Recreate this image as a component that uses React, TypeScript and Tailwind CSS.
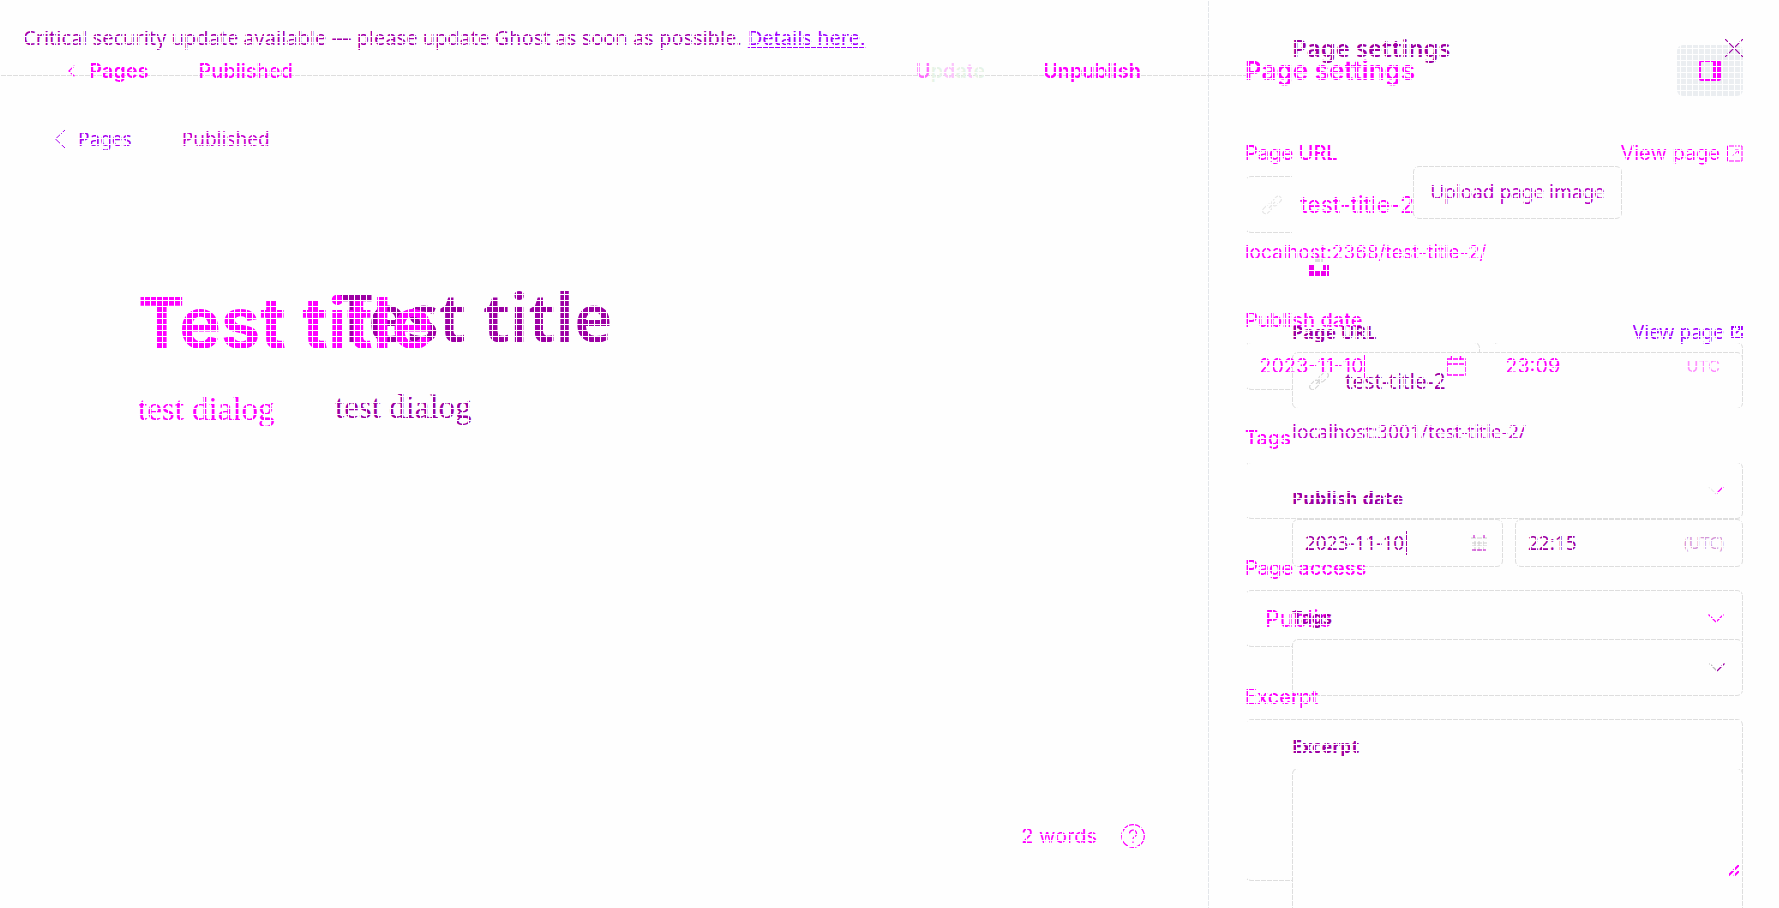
import React from "react";

const label = "relative z-20 flex h-6 items-center text-xl font-medium";
const newBox = "flex items-center rounded-md border border-[#dedede] border-l-transparent";
const oldBox = "relative z-10 flex items-center rounded-md border border-[#dedede] bg-[#fefefe]";
const oldLabel = "relative z-20 flex h-6 items-center text-lg font-bold";
const field = "relative z-20 min-w-0 flex-1 bg-transparent leading-6 outline-none";

function Chevron({ className, light }: { className?: string; light?: string }) {
  return (
    <svg viewBox="0 0 16 9" className={className} fill="none" strokeWidth="1.3">
      <path d="M0.5 0.5 L8 8" stroke={light ?? "currentColor"} />
      <path d="M8 8 L15.5 0.5" stroke="currentColor" />
    </svg>
  );
}

function Back({ className }: { className?: string }) {
  return (
    <svg viewBox="0 0 12 20" className={className} fill="none" stroke="currentColor">
      <path d="M11 1 L1.5 10 L11 19" />
    </svg>
  );
}

function LinkIcon({ className }: { className?: string }) {
  return (
    <svg viewBox="0 0 20 20" className={className} fill="none" stroke="currentColor" strokeWidth="1.2">
      <rect x="9" y="3" width="11" height="6" rx="3" transform="rotate(-45 14.5 6)" />
      <rect x="0" y="11" width="11" height="6" rx="3" transform="rotate(-45 5.5 14)" />
      <path d="M7 13 L13 7" />
    </svg>
  );
}

function NewEditor() {
  return (
    <div className="col-start-1 row-start-1 flex min-h-screen font-['Inter',sans-serif] text-[#ff00ff]">
      <main className="flex min-w-0 flex-1 flex-col">
        <nav className="relative z-20 mt-[47px] flex h-12 items-center pl-[68px] pr-[67px] text-xl font-medium">
          <a href="#pages" className="flex items-center gap-[14px] font-semibold">
            <Back className="h-3 w-[7px] stroke-2" />
            Pages
          </a>
          <span className="ml-[50px]">Published</span>
          <button type="button" className="ml-auto text-[#e6f3e6]">
            <span className="text-[#ff6bff]">U</span>p<span className="text-[#fbc4fb]">d</span>a<span className="text-[#fbc4fb]">t</span>e
          </button>
          <button type="button" className="ml-[58px] font-semibold">Unpublish</button>
        </nav>
        <article className="relative z-20 mt-[184px] flex flex-col pl-[138px]">
          <h1 className="text-[70px] font-bold leading-[88px]">Test title</h1>
          <p className="mt-[22px] font-['Liberation_Serif',serif] text-[33px] leading-10">test dialog</p>
        </article>
        <footer className="relative z-20 mb-12 mt-auto flex h-12 items-center justify-end gap-6 pr-[63px] text-xl">
          2 words
          <svg viewBox="0 0 24 24" className="size-6" fill="none" stroke="currentColor" strokeWidth="1.2">
            <circle cx="12" cy="12" r="11.3" />
            <path d="M8.5 9.5a3.5 3.5 0 1 1 5 3.2c-1 .6-1.500 1-1.500 2.300M12 17.500v1.500" />
          </svg>
        </footer>
      </main>
      <aside className="w-[571px] shrink-0 border-l border-[#e3e6ea] px-9 pt-[45px]">
        <header className="flex h-[51px] items-center justify-between">
          <h2 className="relative z-20 text-[26px] font-semibold">Page settings</h2>
          <button type="button" aria-label="Settings" className="relative z-20 flex h-[51px] w-[66px] items-center justify-center rounded-md bg-[#ebeef1]">
            <svg viewBox="0 0 22 21" className="h-[21px] w-[22px]">
              <rect x="1" y="1" width="20" height="19" rx="1.500" fill="none" stroke="currentColor" strokeWidth="2" />
              <rect x="14" y="1" width="7" height="19" fill="currentColor" />
            </svg>
          </button>
        </header>
        <div className="mt-[45px] flex justify-between">
          <label htmlFor="url" className={label}>Page URL</label>
          <a href="#view" className="relative z-20 flex h-6 items-center gap-[6px] text-xl">
            View page
            <svg viewBox="0 0 17 17" className="size-[17px]" fill="none" stroke="currentColor">
              <path d="M10.500 1H1.500V16H16V1H12M7 10.500L12.500 5M8.500 5H12.500V8.500" />
            </svg>
          </a>
        </div>
        <div className={newBox + " mt-[11px] h-[57px] pl-4"}>
          <LinkIcon className="relative z-20 size-5 text-[#e6e6e6]" />
          <input id="url" className={field + " ml-[18px] text-[23px]"} defaultValue="test-title-2" />
        </div>
        <p className="relative z-20 mt-2 text-[19px] leading-6">localhost:2368/test-title-2/</p>
        <label htmlFor="date" className={label + " mt-[43px]"}>Publish date</label>
        <div className="mt-[10px] flex gap-3">
          <div className={newBox + " h-12 w-[235px] shrink-0 px-[13px]"}>
            <div className="relative z-20 flex min-w-0 flex-1 items-center">
              <input id="date" className="w-[106px] border-r border-[#ff00ff] bg-transparent text-xl leading-6 outline-none" defaultValue="2023-11-10" />
            </div>
            <svg viewBox="0 0 20 20" className="relative z-20 size-5 shrink-0" fill="none" stroke="currentColor">
              <path d="M1 3H19V19H1ZM1 8H19M5.500 0V5M14.500 0V5" strokeWidth="1.500" />
            </svg>
          </div>
          <div className={newBox + " h-12 min-w-0 flex-1 pl-3 pr-[22px]"}>
            <input aria-label="Time" className={field + " text-xl"} defaultValue="23:09" />
            <span className="relative z-20 text-base text-[#ff8cff]">UTC</span>
          </div>
        </div>
        <label htmlFor="tags" className={label + " mt-9"}>Tags</label>
        <div className={newBox + " mt-3 h-[57px] pr-[18px]"}>
          <input id="tags" className={field + " text-xl"} />
          <Chevron className="relative z-20 h-[9px] w-4" light="#eeeeee" />
        </div>
        <label htmlFor="access" className={label + " mt-[37px]"}>Page access</label>
        <div className={newBox + " mt-[10px] h-[57px] pl-[19px] pr-[18px]"}>
          <select id="access" className={field + " appearance-none text-[23px]"}>
            <option>Public</option>
          </select>
          <Chevron className="relative z-20 h-[9px] w-4" />
        </div>
        <label htmlFor="excerpt" className={label + " mt-[38px]"}>Excerpt</label>
        <div className={newBox + " mt-[10px] h-[162px] items-end pb-1 pr-[3px]"}>
          <textarea id="excerpt" className={field + " h-full resize-none"} />
          <svg viewBox="0 0 11 11" className="relative z-20 size-[11px]" stroke="currentColor" strokeWidth="2">
            <path d="M0 11L11 0M6 11L11 6" />
          </svg>
        </div>
      </aside>
    </div>
  );
}

function OldEditor() {
  return (
    <div className="col-start-1 row-start-1 flex min-h-screen font-['Noto_Sans','Open_Sans',sans-serif] text-[#9c00a3]">
      <main className="flex min-w-0 flex-1 flex-col">
        <p className="flex h-[76px] items-center gap-[6px] border-b border-[#dedede] pl-[23px] text-xl text-[#a400ac]">
          Critical security update available — please update Ghost as soon as possible.
          <a href="#details" className="text-[#a000ff] underline underline-offset-2">Details here.</a>
        </p>
        <nav className="mt-[39px] flex h-12 items-center pl-[54px] text-[19px]">
          <a href="#all" className="flex items-center gap-3 text-[#a800f0]">
            <Back className="h-5 w-3" />
            Pages
          </a>
          <span className="ml-[50px] text-[#c400cc]">Published</span>
        </nav>
        <article className="relative z-10 mt-[109px] flex flex-col pl-[335px]">
          <h1 className="text-[66px] font-semibold leading-[88px]">Test title</h1>
          <p className="mt-[27px] font-['Liberation_Serif',serif] text-[33px] leading-10">test dialog</p>
        </article>
      </main>
      <aside className="flex w-[533px] shrink-0 flex-col pl-[46px] pr-9 pt-8">
        <header className="relative z-20 flex h-8 items-center justify-between">
          <h2 className="text-2xl font-semibold">Page settings</h2>
          <button type="button" aria-label="Close">
            <svg viewBox="0 0 18 18" className="size-[18px]" stroke="currentColor" strokeWidth="1.200">
              <path d="M0 0L18 18M18 0L0 18" />
            </svg>
          </button>
        </header>
        <div className="relative z-10 mt-[27px] grid h-[202px] bg-[#fefefe]">
          <svg viewBox="0 0 20 20" className="relative z-20 col-start-1 row-start-1 mb-[17px] ml-[17px] size-5 self-end">
            <path d="M6 0h8v6H6z" fill="#dddddd" />
            <path d="M0 9h6v5h8V9h6v11H0z" fill="#ee00ee" />
          </svg>
          <button type="button" className="col-start-1 row-start-1 h-[53px] w-[209px] place-self-center rounded-md border border-[#dedede] text-[19px] text-[#b800c4]">
            Upload page image
          </button>
        </div>
        <div className="mt-[27px] flex justify-between">
          <label htmlFor="old-url" className={oldLabel}>Page URL</label>
          <a href="#open" className="relative z-20 flex h-6 items-center gap-[7px] text-[19px] text-[#a000ff]">
            View page
            <svg viewBox="0 0 12 12" className="size-3" fill="none" stroke="currentColor" strokeWidth="1.800">
              <path d="M5 1H1V11H11V7M5 7L11 1M7 1H11V5" />
            </svg>
          </a>
        </div>
        <div className={oldBox + " mt-2 h-[57px] pl-4"}>
          <LinkIcon className="size-5 text-[#d6d6d6]" />
          <input id="old-url" className={field + " ml-4 text-[21px]"} defaultValue="test-title-2" />
        </div>
        <p className="relative z-20 mt-[11px] text-[19px] leading-6 text-[#bc00c8]">localhost:3001/test-title-2/</p>
        <label htmlFor="old-date" className={oldLabel + " mt-[42px]"}>Publish date</label>
        <div className="mt-[9px] flex gap-3">
          <div className={oldBox + " h-12 w-[211px] shrink-0 px-3"}>
            <div className="flex min-w-0 flex-1 items-center">
              <input id="old-date" className="w-[102px] border-r border-[#9c00a3] bg-transparent text-[19px] leading-6 outline-none" defaultValue="2023-11-10" />
            </div>
            <svg viewBox="0 0 16 16" className="mr-[3px] size-4 shrink-0" fill="none">
              <path d="M0 3H16M1 8H16M1 11H16M4 5V16M8 5V16M12 5V16" stroke="#cccccc" />
              <path d="M3 0V3M13 0V3M1 15H15" stroke="#c000c8" />
            </svg>
          </div>
          <div className={oldBox + " h-12 min-w-0 flex-1 pl-3 pr-[18px]"}>
            <input aria-label="Hour" className={field + " text-[19px]"} defaultValue="22:15" />
            <span className="text-base text-[#d59ad8]">(UTC)</span>
          </div>
        </div>
        <label htmlFor="old-tags" className={oldLabel + " mt-[38px]"}>Tags</label>
        <div className={oldBox + " mt-[10px] h-[57px] pr-[17px]"}>
          <input id="old-tags" className={field + " text-lg"} />
          <Chevron className="h-[9px] w-4" light="#bbbbbb" />
        </div>
        <label htmlFor="old-excerpt" className={oldLabel + " mt-[38px]"}>Excerpt</label>
        <textarea id="old-excerpt" className="relative z-10 mt-[10px] min-h-32 flex-1 resize-none rounded-t-md border border-b-0 border-[#dedede] bg-[#fefefe] outline-none" />
      </aside>
    </div>
  );
}

export default function App() {
  return (
    <div className="relative grid min-h-screen grid-cols-1 overflow-hidden bg-[#fefefe]">
      <NewEditor />
      <OldEditor />
      <div className="pointer-events-none absolute inset-0 z-30 bg-[linear-gradient(to_right,#fefefe_1px,transparent_1px),linear-gradient(to_bottom,#fefefe_1px,transparent_1px)] bg-[size:6px_6px]" />
    </div>
  );
}
